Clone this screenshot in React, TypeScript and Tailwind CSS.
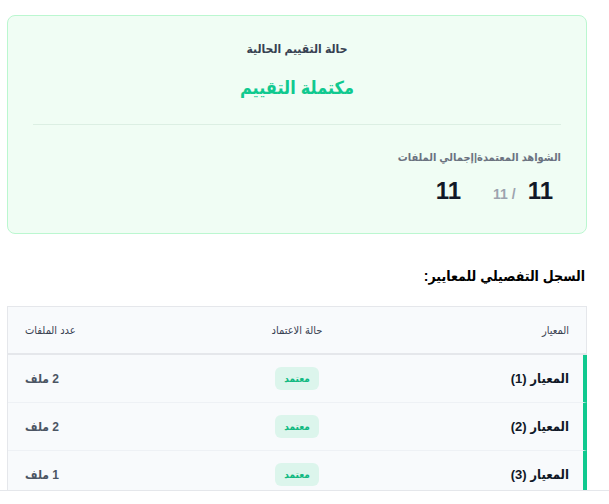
import React from "react";

const rows = [
  { name: "المعيار (1)", files: "2 ملف" },
  { name: "المعيار (2)", files: "2 ملف" },
  { name: "المعيار (3)", files: "1 ملف" },
];

export default function App() {
  return (
    <div
      dir="rtl"
      className="w-[609px] h-[504px] flex flex-col bg-white overflow-hidden font-['Liberation_Sans','DejaVu_Sans_Condensed','DejaVu_Sans',sans-serif]"
    >
      {/* Scroll area */}
      <div className="h-[490px] overflow-hidden">
        <div className="w-[594px] mr-auto px-[7px] pt-[15px]">
          {/* Status Card */}
          <div className="bg-[#f0fdf4] border border-[#bbf7d0] rounded-lg px-[25px] pt-[25px] pb-[26px]">
            <div className="flex flex-col items-center text-center">
              <p className="text-[12px] leading-4 font-bold text-[#374151]">
                حالة التقييم الحالية
              </p>
              <p className="text-[18px] leading-7 font-bold text-[#10c98f] mt-[17px]">
                مكتملة التقييم
              </p>
            </div>

            <div className="h-px bg-[#dcefe3] mt-[22px]" />

            <div className="mt-[24px]">
              <p className="text-[11px] leading-4 font-bold text-[#6b7280]">
                الشواهد المعتمدة|إجمالي الملفات
              </p>
              <div className="flex items-baseline gap-[32px] mt-[10px] pr-[8px]">
                <div className="flex items-baseline gap-[12px]">
                  <span className="text-[24px] leading-8 font-bold text-[#111827]">11</span>
                  <span className="text-[14px] font-bold text-[#9ca3af]">/ 11</span>
                </div>
                <span className="text-[24px] leading-8 font-bold text-[#111827]">11</span>
              </div>
            </div>
          </div>

          {/* Detailed log heading */}
          <h2 className="mt-[32px] text-[14px] leading-5 font-bold text-black pr-[2px]">
            السجل التفصيلي للمعايير:
          </h2>

          {/* Table */}
          <div className="mt-[20px] w-[580px] border-l border-t border-[#e5e7eb]">
            <div className="grid grid-cols-3 items-center h-[48px] bg-[#f8fafc] border-b-2 border-b-[#e5e7eb] border-r border-r-[#e5e7eb] px-[17px] text-[11px] text-[#374151]">
              <span className="text-right">المعيار</span>
              <span className="text-center">حالة الاعتماد</span>
              <span className="text-left">عدد الملفات</span>
            </div>
            {rows.map((row) => (
              <div
                key={row.name}
                className="grid grid-cols-3 items-center h-[48px] bg-[#f8fafc] border-b border-b-[#eef1f5] border-r-4 border-r-[#10c98f] pr-[14px] pl-[17px]"
              >
                <span className="text-right text-[13px] font-bold text-[#111827]">{row.name}</span>
                <span className="flex justify-center">
                  <span className="bg-[#dcf5ec] text-[#10b981] text-[10px] font-bold rounded-md px-[9px] py-[4px] leading-[15px]">
                    معتمد
                  </span>
                </span>
                <span className="text-left text-[12px] font-bold text-[#4b5563]">{row.files}</span>
              </div>
            ))}
          </div>
        </div>
      </div>
      <div className="flex-1 border-t border-[#e5e7eb] bg-white" />
    </div>
  );
}
